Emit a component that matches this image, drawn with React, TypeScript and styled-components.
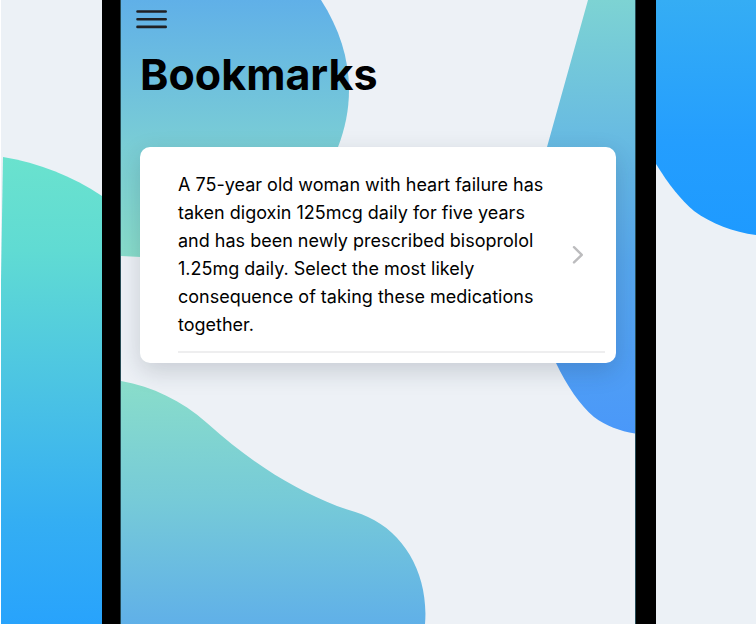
import React from "react";
import styled, { createGlobalStyle } from "styled-components";

const GlobalStyle = createGlobalStyle`
  *, *::before, *::after { box-sizing: border-box; }
  body { margin: 0; background: #ecf1f6; }
`;

const Page = styled.div`
  display: grid;
  grid-template-columns: 102px minmax(0, 1fr) 100px;
  min-height: 100vh;
  font-family: Inter, "Liberation Sans", sans-serif;
  color: #000;
  overflow: hidden;
`;

const Side = styled.aside<{ $edge?: boolean }>`
  position: relative;
  overflow: hidden;
  background: #ecf1f6;
  border-left: ${({ $edge }) => ($edge ? "1px solid #fff" : "none")};
`;

const Phone = styled.main`
  display: grid;
  border: solid #000;
  border-width: 0 20px 0 18px;
`;

const Screen = styled.div`
  position: relative;
  isolation: isolate;
  overflow: hidden;
  background: #edf1f6;
  border: solid #264a54;
  border-width: 0 1px;
  padding: 0 19px 24px;
`;

const Blob = styled.svg<{ $right?: boolean; $bottom?: boolean }>`
  position: absolute;
  z-index: -1;
  display: block;
  ${({ $right }) => ($right ? "right: 0;" : "left: 0;")}
  ${({ $bottom }) => ($bottom ? "bottom: 0;" : "top: 0;")}
`;

const SideArt = styled.svg`
  display: block;
`;

const Header = styled.header`
  display: flex;
  flex-direction: column;
  align-items: flex-start;
  height: 147px;
`;

const MenuButton = styled.button`
  display: flex;
  align-items: center;
  justify-content: center;
  width: 40px;
  height: 38px;
  margin: 0 0 0 -8px;
  padding: 0;
  border: 0;
  background: none;
  cursor: pointer;
`;

const Title = styled.h1`
  margin: 8px 0 0;
  font-size: 43px;
  line-height: 56px;
  font-weight: 700;
`;

const List = styled.ul`
  margin: 0;
  padding: 24px 11px 10px 38px;
  list-style: none;
  background: #fff;
  border-radius: 10px;
  box-shadow: 0 8px 24px rgba(30, 40, 55, 0.18);
`;

const Row = styled.a`
  display: flex;
  flex-direction: column;
  color: inherit;
  text-decoration: none;
  border-bottom: 2px solid #eeeeef;
  padding-bottom: 12px;
`;

const RowContent = styled.div`
  display: flex;
  align-items: center;
  justify-content: space-between;
  gap: 16px;
  padding-right: 21px;
`;

const Question = styled.span`
  max-width: 376px;
  font-size: 18px;
  line-height: 28px;
`;

const bookmarks = [
  {
    id: "digoxin-bisoprolol",
    text: "A 75-year old woman with heart failure has taken digoxin 125mcg daily for five years and has been newly prescribed bisoprolol 1.25mg daily. Select the most likely consequence of taking these medications together.",
  },
];

function MenuIcon() {
  return (
    <svg width="32" height="20" viewBox="0 0 32 20" fill="none" stroke="#202124" strokeWidth="2.6" strokeLinecap="round" aria-hidden="true">
      <path d="M1.5 2.5H29.7M1.5 10.2H29.7M1.5 17.9H29.7" />
    </svg>
  );
}

function Chevron() {
  return (
    <svg width="12" height="20" viewBox="0 0 12 20" fill="none" stroke="#bcbcbe" strokeWidth="2.4" strokeLinecap="round" strokeLinejoin="round" aria-hidden="true">
      <path d="M2 2.2L9.8 9.8L2 17.4" />
    </svg>
  );
}

export default function App() {
  return (
    <>
      <GlobalStyle />
      <Page>
        <Side $edge>
          <SideArt width="101" height="624" viewBox="0 0 101 624" aria-hidden="true">
            <defs>
              <linearGradient id="side-left" gradientUnits="userSpaceOnUse" x1="0" y1="157" x2="0" y2="624">
                <stop offset="0" stopColor="#6ae2ce" />
                <stop offset="0.2" stopColor="#60dbd3" />
                <stop offset="0.54" stopColor="#48c0e6" />
                <stop offset="0.78" stopColor="#34aef3" />
                <stop offset="1" stopColor="#28a3fc" />
              </linearGradient>
            </defs>
            <path fill="url(#side-left)" d="M2 157C38 163 71 176 101 196V624H0V280Z" />
          </SideArt>
        </Side>
        <Phone>
          <Screen>
            <Blob width="229" height="257" viewBox="121 0 229 257" aria-hidden="true">
              <defs>
                <linearGradient id="top-left" x1="0" y1="0" x2="0" y2="1">
                  <stop offset="0" stopColor="#60b0e8" />
                  <stop offset="0.57" stopColor="#7acdd5" />
                  <stop offset="1" stopColor="#88ddcb" />
                </linearGradient>
              </defs>
              <path fill="url(#top-left)" d="M121 0H321C339 28 349 58 349 90C349 110 345 129 338 147C310 215 230 258 141 257L121 256Z" />
            </Blob>
            <Blob $right width="95" height="434" viewBox="540 0 95 434" aria-hidden="true">
              <defs>
                <linearGradient id="right" x1="0" y1="0" x2="0" y2="1">
                  <stop offset="0" stopColor="#7dd3d3" />
                  <stop offset="0.3" stopColor="#69bce1" />
                  <stop offset="0.6" stopColor="#57a7ed" />
                  <stop offset="1" stopColor="#4a98f9" />
                </linearGradient>
              </defs>
              <path fill="url(#right)" d="M588 0L547 147C538 230 530 300 556 363C567 386 580 405 594 417C606 426 620 431 635 433.500V0Z" />
            </Blob>
            <Blob $bottom width="306" height="244" viewBox="121 380 306 244" aria-hidden="true">
              <defs>
                <linearGradient id="bottom-left" x1="0" y1="0" x2="0" y2="1">
                  <stop offset="0" stopColor="#89ddca" />
                  <stop offset="0.5" stopColor="#76cad8" />
                  <stop offset="1" stopColor="#60b0e8" />
                </linearGradient>
              </defs>
              <path fill="url(#bottom-left)" d="M121 381C153 387 181 400 207 423C253 464 292 488 337 506C347 510 358 512 368 517C406 534 429 577 425 624H121Z" />
            </Blob>
            <Header>
              <MenuButton type="button" aria-label="Open menu">
                <MenuIcon />
              </MenuButton>
              <Title>Bookmarks</Title>
            </Header>
            <List>
              {bookmarks.map((b) => (
                <li key={b.id}>
                  <Row href={`#${b.id}`}>
                    <RowContent>
                      <Question>{b.text}</Question>
                      <Chevron />
                    </RowContent>
                  </Row>
                </li>
              ))}
            </List>
          </Screen>
        </Phone>
        <Side>
          <SideArt width="100" height="236" viewBox="656 0 100 236" aria-hidden="true">
            <defs>
              <linearGradient id="side-right" x1="0" y1="0" x2="0" y2="1">
                <stop offset="0" stopColor="#35adf4" />
                <stop offset="0.6" stopColor="#249efe" />
                <stop offset="1" stopColor="#1e9aff" />
              </linearGradient>
            </defs>
            <path fill="url(#side-right)" d="M656 0V164C669 185 681 200 694 211C712 224 733 232 756 235V0Z" />
          </SideArt>
        </Side>
      </Page>
    </>
  );
}
